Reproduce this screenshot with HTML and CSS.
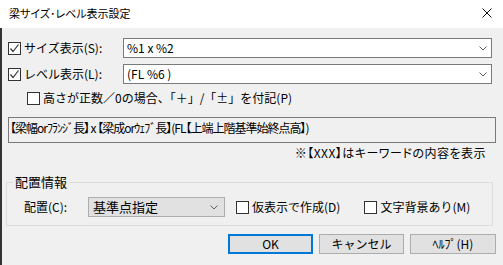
FILE: index.html
```html
<!DOCTYPE html>
<html lang="ja">

<head>
    <meta charset="UTF-8">
    <title>梁サイズ･レベル表示設定</title>
    <link rel="stylesheet" href="styles.css">
</head>

<body>
    <div class="window">
        <!-- Title bar -->
        <div class="titlebar">
            <span class="title">梁サイズ･レベル表示設定</span>
            <svg class="close" width="10" height="10" viewBox="0 0 10 10">
                <path d="M0.5 0.5 L9.5 9.5 M9.5 0.5 L0.5 9.5" stroke="#111" stroke-width="1" fill="none"/>
            </svg>
        </div>

        <div class="content">
            <!-- Size / level rows -->
            <div class="row">
                <div class="check-label">
                    <span class="box"><svg width="11" height="11" viewBox="0 0 11 11"><path d="M1.5 5.5 L4 8.5 L9.5 1.5" stroke="#333" stroke-width="1.2" fill="none"/></svg></span>
                    <span>サイズ表示(S):</span>
                </div>
                <div class="combo">
                    <span>%1 x %2</span>
                    <svg class="chev" width="8" height="5" viewBox="0 0 8 5"><path d="M0.5 0.5 L4 4 L7.5 0.5" stroke="#606060" fill="none"/></svg>
                </div>
            </div>
            <div class="row row-gap">
                <div class="check-label">
                    <span class="box"><svg width="11" height="11" viewBox="0 0 11 11"><path d="M1.5 5.5 L4 8.5 L9.5 1.5" stroke="#333" stroke-width="1.2" fill="none"/></svg></span>
                    <span>レベル表示(L):</span>
                </div>
                <div class="combo">
                    <span>(FL %6 )</span>
                    <svg class="chev" width="8" height="5" viewBox="0 0 8 5"><path d="M0.5 0.5 L4 4 L7.5 0.5" stroke="#606060" fill="none"/></svg>
                </div>
            </div>

            <div class="sign-row">
                <span class="box"></span>
                <span>高さが正数／0の場合、「＋」/「±」を付記(P)</span>
            </div>

            <!-- Preview -->
            <div class="preview">【梁幅orﾌﾗﾝｼﾞ長】 x 【梁成orｳｪﾌﾞ長】(FL【上端上階基準始終点高】)</div>
            <div class="note">※【XXX】はキーワードの内容を表示</div>

            <!-- Placement group -->
            <fieldset class="group">
                <legend>配置情報</legend>
                <div class="group-row">
                    <span class="place-label">配置(C):</span>
                    <div class="select">
                        <span>基準点指定</span>
                        <svg class="chev" width="8" height="5" viewBox="0 0 8 5"><path d="M0.5 0.5 L4 4 L7.5 0.5" stroke="#606060" fill="none"/></svg>
                    </div>
                    <div class="opt">
                        <span class="box"></span>
                        <span>仮表示で作成(D)</span>
                    </div>
                    <div class="opt">
                        <span class="box"></span>
                        <span>文字背景あり(M)</span>
                    </div>
                </div>
            </fieldset>

            <!-- Buttons -->
            <div class="buttons">
                <button class="btn btn-default">OK</button>
                <button class="btn">キャンセル</button>
                <button class="btn btn-help">ﾍﾙﾌﾟ(H)</button>
            </div>
        </div>
    </div>
</body>

</html>
```

FILE: styles.css
```css
* {
    margin: 0;
    padding: 0;
    box-sizing: border-box;
}

body {
    font-family: "Noto Sans CJK JP", "Noto Sans", sans-serif;
    font-size: 12px;
    color: #000;
    background: #f0f0f0;
}

.window {
    width: 503px;
    height: 265px;
    overflow: hidden;
    background: #f0f0f0;
}

/* Title bar */
.titlebar {
    height: 28px;
    background: #fff;
    display: flex;
    align-items: center;
    justify-content: space-between;
    padding: 0 11px 2px 9px;
}

.title {
    font-size: 11px;
    line-height: 14px;
    font-feature-settings: "palt";
}

.close {
    display: block;
}

/* Main area */
.content {
    height: 237px;
    border-left: 2px solid #333;
    padding: 10px 7px 0 6px;
}

.row {
    display: flex;
    align-items: center;
    height: 20px;
    margin-right: 4px;
}

.row-gap {
    margin-top: 6px;
}

.check-label {
    width: 115px;
    display: flex;
    align-items: center;
    line-height: 14px;
}

.box {
    width: 13px;
    height: 13px;
    border: 1px solid #333;
    background: #fff;
    display: flex;
    align-items: center;
    justify-content: center;
    margin-right: 3px;
    flex-shrink: 0;
}

.box svg {
    display: block;
}

.combo {
    flex: 1;
    height: 20px;
    background: #fff;
    border: 1px solid #7a7a7a;
    display: flex;
    align-items: center;
    justify-content: space-between;
    padding: 0 4px 0 3px;
    line-height: 14px;
}

.chev {
    display: block;
}

.sign-row {
    display: flex;
    align-items: center;
    margin-top: 7px;
    padding-left: 19px;
    height: 14px;
    line-height: 14px;
}

.preview {
    margin-top: 12px;
    height: 26px;
    border: 1px solid #7a7a7a;
    background: #f0f0f0;
    padding: 1px 1px 0;
    font-size: 12px;
    line-height: 18px;
    letter-spacing: -1px;
    font-feature-settings: "palt";
    white-space: nowrap;
    overflow: hidden;
}

.note {
    margin-top: 3px;
    height: 14px;
    line-height: 14px;
    text-align: right;
    padding-right: 10px;
    letter-spacing: 0.5px;
    font-feature-settings: "palt";
}

/* Group box */
.group {
    margin: 14px 3px 0 -2px;
    border: 1px solid #dcdcdc;
    padding: 0 0 0 6px;
    height: 52px;
}

.group legend {
    font-size: 13px;
    line-height: 16px;
    padding: 0 2px;
}

.group-row {
    display: flex;
    align-items: center;
    margin-top: 7px;
    padding-left: 11px;
}

.place-label {
    width: 64px;
    line-height: 14px;
}

.select {
    width: 137px;
    height: 20px;
    background: #e1e1e1;
    border: 1px solid #adadad;
    display: flex;
    align-items: center;
    justify-content: space-between;
    padding: 0 6px 0 4px;
    font-size: 13px;
    line-height: 16px;
}

.opt {
    display: flex;
    align-items: center;
    margin-left: 11px;
    line-height: 14px;
}

.opt + .opt {
    margin-left: 24px;
}

/* Buttons */
.buttons {
    display: flex;
    justify-content: flex-end;
    gap: 6px;
    margin-top: 8px;
}

.btn {
    width: 85px;
    height: 20px;
    background: #e1e1e1;
    border: 1px solid #adadad;
    font-family: inherit;
    font-size: 12px;
    line-height: 14px;
    color: #000;
}

.btn-default {
    border: 2px solid #0078d7;
}

.btn-help {
    width: 86px;
}
```
